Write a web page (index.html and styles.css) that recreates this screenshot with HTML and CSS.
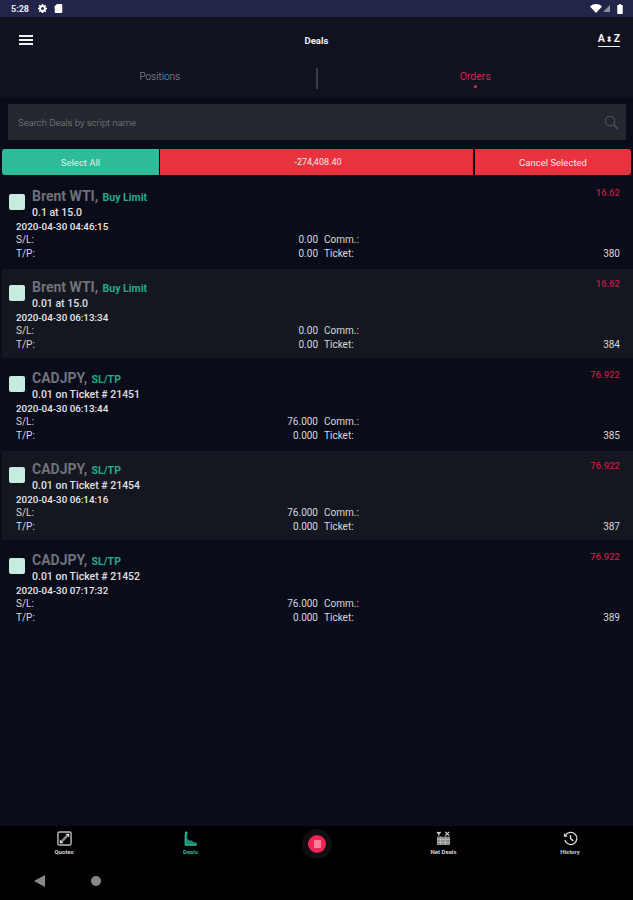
FILE: index.html
```html
<!DOCTYPE html>
<html lang="en">
<head>
  <meta charset="UTF-8" />
  <meta name="viewport" content="width=device-width, initial-scale=1.0" />
  <title>Deals</title>
  <link rel="stylesheet" href="styles.css">
</head>
<body>
  <div class="status-bar">
    <span class="clock">5:28</span>
    <svg class="status-icon" viewBox="0 0 12 12"><path fill="#fff" fill-rule="evenodd" d="M5 0h2l.3 1.6 1.1.5L9.800 1.200l1.200 1.300-1 1.300.4 1.100L12 5v2l-1.600.3-.4 1.100 1 1.300-1.200 1.300-1.400-.9-1.100.5L7 12H5l-.3-1.600-1.100-.5-1.400.9L1 9.500l1-1.300-.4-1.100L0 7V5l1.600-.2.400-1.100-1-1.300 1.200-1.300 1.400.9 1.100-.5zM6 4a2 2 0 1 0 0 4 2 2 0 0 0 0-4z"/></svg>
    <svg class="status-icon" viewBox="0 0 10 12"><path fill="#fff" d="M3 0h6a1 1 0 0 1 1 1v10a1 1 0 0 1-1 1H1a1 1 0 0 1-1-1V3z"/></svg>
    <span class="status-right">
      <svg class="wifi" viewBox="0 0 12 9"><path fill="#fff" d="M0 2.500C3.500-.8 8.500-.8 12 2.500L6 9z"/></svg>
      <svg class="signal" viewBox="0 0 8 8"><path fill="#8d8d9c" d="M8 0v8H0z"/></svg>
      <svg class="battery" viewBox="0 0 6 11"><path fill="#fff" d="M2 0h2v1h1.500a.5.5 0 0 1 .5.500V10.500a.5.5 0 0 1-.5.500H.5a.5.5 0 0 1-.5-.5V1.500A.5.5 0 0 1 .5 1H2z"/></svg>
    </span>
  </div>

  <header class="app-bar">
    <div class="menu-icon"><span></span><span></span><span></span></div>
    <div class="app-title">Deals</div>
    <div class="sort-az">A<span class="sort-mid">⬍</span>Z</div>
  </header>

  <nav class="tabs">
    <div class="tab tab-left">Positions</div>
    <div class="tab-divider"></div>
    <div class="tab tab-active">Orders<i class="tab-dot"></i></div>
  </nav>

  <div class="search-box">
    <span>Search Deals by script name</span>
    <svg class="search-icon" viewBox="0 0 16 16"><circle cx="6.500" cy="6.500" r="5" fill="none" stroke="#4a4c53" stroke-width="1.500"/><path d="M10.200 10.200L15 15" stroke="#4a4c53" stroke-width="2"/></svg>
  </div>

  <div class="actions">
    <div class="btn btn-green">Select All</div>
    <div class="btn btn-red btn-total">-274,408.40</div>
    <div class="btn btn-red btn-cancel">Cancel Selected</div>
  </div>

  <main class="deals">
    <section class="deal">
      <div class="deal-head">
        <div class="check"></div>
        <div class="deal-name">
          <div><b class="script">Brent WTI,</b> <span class="type">Buy Limit</span></div>
          <div class="qty">0.1 at 15.0</div>
        </div>
        <div class="price">16.62</div>
      </div>
      <div class="date">2020-04-30 04:46:15</div>
      <div class="figures">
        <span>S/L:</span><span class="num">0.00</span><span>Comm.:</span><span></span>
        <span>T/P:</span><span class="num">0.00</span><span>Ticket:</span><span class="num">380</span>
      </div>
    </section>
    <section class="deal deal-alt">
      <div class="deal-head">
        <div class="check"></div>
        <div class="deal-name">
          <div><b class="script">Brent WTI,</b> <span class="type">Buy Limit</span></div>
          <div class="qty">0.01 at 15.0</div>
        </div>
        <div class="price">16.62</div>
      </div>
      <div class="date">2020-04-30 06:13:34</div>
      <div class="figures">
        <span>S/L:</span><span class="num">0.00</span><span>Comm.:</span><span></span>
        <span>T/P:</span><span class="num">0.00</span><span>Ticket:</span><span class="num">384</span>
      </div>
    </section>
    <section class="deal">
      <div class="deal-head">
        <div class="check"></div>
        <div class="deal-name">
          <div><b class="script">CADJPY,</b> <span class="type">SL/TP</span></div>
          <div class="qty">0.01 on Ticket # 21451</div>
        </div>
        <div class="price">76.922</div>
      </div>
      <div class="date">2020-04-30 06:13:44</div>
      <div class="figures">
        <span>S/L:</span><span class="num">76.000</span><span>Comm.:</span><span></span>
        <span>T/P:</span><span class="num">0.000</span><span>Ticket:</span><span class="num">385</span>
      </div>
    </section>
    <section class="deal deal-alt">
      <div class="deal-head">
        <div class="check"></div>
        <div class="deal-name">
          <div><b class="script">CADJPY,</b> <span class="type">SL/TP</span></div>
          <div class="qty">0.01 on Ticket # 21454</div>
        </div>
        <div class="price">76.922</div>
      </div>
      <div class="date">2020-04-30 06:14:16</div>
      <div class="figures">
        <span>S/L:</span><span class="num">76.000</span><span>Comm.:</span><span></span>
        <span>T/P:</span><span class="num">0.000</span><span>Ticket:</span><span class="num">387</span>
      </div>
    </section>
    <section class="deal">
      <div class="deal-head">
        <div class="check"></div>
        <div class="deal-name">
          <div><b class="script">CADJPY,</b> <span class="type">SL/TP</span></div>
          <div class="qty">0.01 on Ticket # 21452</div>
        </div>
        <div class="price">76.922</div>
      </div>
      <div class="date">2020-04-30 07:17:32</div>
      <div class="figures">
        <span>S/L:</span><span class="num">76.000</span><span>Comm.:</span><span></span>
        <span>T/P:</span><span class="num">0.000</span><span>Ticket:</span><span class="num">389</span>
      </div>
    </section>
  </main>

  <footer class="bottom">
    <div class="bottom-nav">
      <div class="nav-item">
        <svg viewBox="0 0 16 16"><rect x="1" y="1" width="14" height="14" rx="1.500" fill="none" stroke="#bdbdbd" stroke-width="1.500"/><path d="M9 3h4v4zM3 13V9l4 4z" fill="#e8e8e8"/><path d="M5 11l6-6" stroke="#8a8a8a" stroke-width="2.500"/></svg>
        <span>Quotes</span>
      </div>
      <div class="nav-item nav-active">
        <svg viewBox="0 0 16 16"><circle cx="3.500" cy="2" r="1.500" fill="#2bb594"/><path d="M2.500 3h2v5l2 2h3l2 2h3v3h-12z" fill="#1f8a70"/><path d="M2.500 3v12h12" fill="none" stroke="#2bb594" stroke-width="1.500"/></svg>
        <span>Deals</span>
      </div>
      <div class="nav-item nav-center">
        <div class="fab"><i class="fab-mark"></i></div>
      </div>
      <div class="nav-item">
        <svg viewBox="0 0 16 16"><path d="M3 1v4M1 1l2 2 2-2M10 1l4 4M14 1l-4 4" stroke="#d8d8d8" stroke-width="1.300" fill="none"/><path d="M1 6h14v9H1z" fill="#8a8a8a"/><path d="M1 9h14M1 12h14M5 6v9M10 6v9" stroke="#c4c4c4" stroke-width=".8"/></svg>
        <span>Net Deals</span>
      </div>
      <div class="nav-item">
        <svg viewBox="0 0 16 16"><path d="M2.500 5A6.500 6.500 0 1 1 2 9.500" fill="none" stroke="#e0e0e0" stroke-width="1.300"/><path d="M1 2v4h4z" fill="#e0e0e0"/><path d="M8 4.500V8l3 2.500" fill="none" stroke="#e0e0e0" stroke-width="1.500"/></svg>
        <span>History</span>
      </div>
    </div>
    <div class="sys-nav">
      <i class="sys-back"></i>
      <i class="sys-home"></i>
    </div>
  </footer>
</body>
</html>
```

FILE: styles.css
```css
* { box-sizing: border-box; }
html, body { height: 100%; }
body { margin: 0; width: 633px; height: 900px; display: flex; flex-direction: column; overflow: hidden; background: #0a0c19; color: #e8e8ea; font-family: Roboto, "Liberation Sans", sans-serif; font-size: 10px; }

.status-bar { height: 17px; display: flex; align-items: center; padding: 0 10px 0 11px; background: #23244a; flex: none; }
.clock { font-size: 9px; font-weight: 700; color: #e8e8f0; width: 20px; }
.status-icon { width: 9px; height: 9px; margin: 0 7px; }
.status-icon + .status-icon { margin-left: 0; }
.status-right { margin-left: auto; display: flex; align-items: center; gap: 1px; }
.wifi { width: 12px; height: 9px; }
.signal { width: 7px; height: 7px; margin-right: 6px; }
.battery { width: 6px; height: 10px; }

.app-bar { height: 43px; display: flex; align-items: center; padding: 3px 13px 0 19px; background: #10121f; flex: none; }
.menu-icon { width: 14px; display: flex; flex-direction: column; gap: 2px; }
.menu-icon span { height: 2px; background: #f0f0f0; }
.app-title { flex: 1; text-align: center; font-size: 9.500px; font-weight: 700; color: #f0f0f0; padding-left: 2px; }
.sort-az { font-size: 10.500px; font-weight: 700; color: #f0f0f0; border-bottom: 1.500px solid #f0f0f0; line-height: 11px; padding-bottom: 1px; white-space: nowrap; }
.sort-mid { font-family: "DejaVu Sans", sans-serif; font-size: 8px; margin: 0 1px; }

.tabs { height: 37px; display: flex; align-items: center; background: #10121f; flex: none; padding-bottom: 4px; }
.tab { flex: 1; text-align: center; font-size: 10px; font-weight: 300; color: #9a9ca3; position: relative; }
.tab-left { text-indent: 4px; }
.tab-divider { width: 2px; height: 21px; background: #3a3c45; margin-top: 3px; }
.tab-active { color: #d42553; font-size: 10.500px; font-weight: 400; }
.tab-dot { position: absolute; left: 50%; top: 15px; width: 3px; height: 3px; margin-left: -1px; border-radius: 50%; background: #e02a58; }

.search-box { height: 36px; margin: 7px 7px 0 8px; padding: 0 7px 0 10px; display: flex; align-items: center; justify-content: space-between; background: #25272e; color: #85878d; font-size: 9.500px; font-weight: 300; flex: none; }
.search-icon { width: 15px; height: 15px; }

.actions { display: flex; gap: 1px; margin: 9px 2px 0; height: 26px; flex: none; }
.btn { display: flex; align-items: center; justify-content: center; font-size: 9.500px; font-weight: 400; color: #f0e8e8; }
.btn-green { width: 157px; background: #2dbb98; border-radius: 3px 0 0 3px; }
.btn-red { background: #e8333f; }
.btn-total { width: 313px; font-size: 9px; padding-left: 3px; }
.btn-cancel { flex: 1; margin-left: 1px; border-radius: 0 3px 3px 0; }

.deals { flex: 1; padding-top: 3px; }
.deal { height: 89px; margin-bottom: 2px; padding: 10px 13px 0 16px; position: relative; }
.deal-alt { background: #14171f; margin-left: 2px; padding-left: 14px; }
.deal-head { height: 36px; position: relative; }
.check { position: absolute; left: -7px; top: 6px; width: 16px; height: 16px; border-radius: 2px; background: #c8ebdf; }
.deal-name { padding-left: 16px; }
.script { font-size: 14px; line-height: 17px; font-weight: 700; color: #70727a; }
.type { font-size: 10.500px; font-weight: 700; color: #27a98a; margin-left: 2px; }
.qty { font-size: 10.500px; font-weight: 500; color: #e0e0e2; line-height: 14px; padding-top: 1px; }
.price { position: absolute; right: 0; top: -1px; font-size: 9.500px; font-weight: 500; color: #c01c45; }
.date { font-size: 9.800px; font-weight: 500; line-height: 13px; margin-top: -4px; }
.figures { display: grid; grid-template-columns: 40px 262px auto 1fr; column-gap: 0; line-height: 13.500px; font-size: 10px; color: #d8d8da; }
.figures .num { text-align: right; }
.figures > span:nth-child(3), .figures > span:nth-child(7) { margin-left: 6px; }

.bottom { flex: none; height: 74px; background: #000; }
.bottom-nav { height: 46px; display: flex; justify-content: space-between; padding: 5px 51px 0 52px; }
.nav-item { width: 24px; display: flex; flex-direction: column; align-items: center; font-size: 6px; font-weight: 700; color: #d0d0d0; white-space: nowrap; }
.nav-item svg { width: 15px; height: 15px; flex: none; }
.nav-item span { margin-top: 2px; }
.nav-active { color: #2bb594; }
.fab { width: 18px; height: 18px; margin-top: 4px; border-radius: 50%; background: #ee2457; box-shadow: 0 0 0 6px #0f0f11; display: flex; align-items: center; justify-content: center; }
.fab-mark { width: 7px; height: 8px; background: #f7809d; }

.sys-nav { display: flex; align-items: center; padding-left: 34px; gap: 46px; height: 18px; }
.sys-back { width: 0; height: 0; border-style: solid; border-width: 6px 11px 6px 0; border-color: transparent #888 transparent transparent; }
.sys-home { width: 10px; height: 10px; border-radius: 50%; background: #888; }
```
